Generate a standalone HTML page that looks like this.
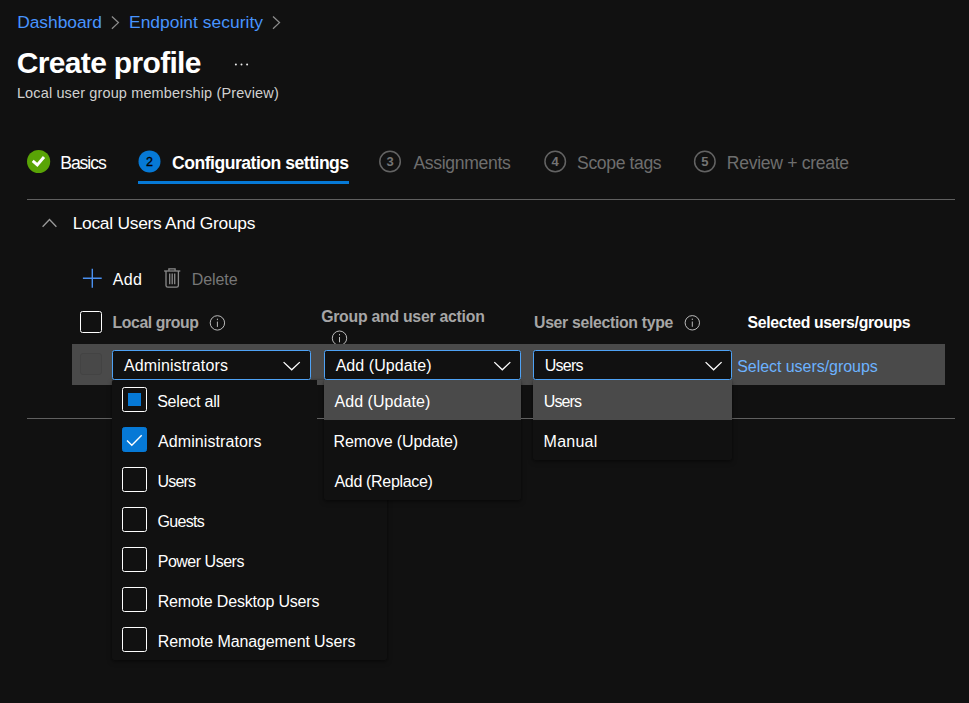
<!DOCTYPE html>
<html lang="en">
<head>
<meta charset="utf-8">
<title>Create profile - Local user group membership (Preview)</title>
<style>
html,body{margin:0;padding:0;}
body{width:969px;height:703px;overflow:hidden;background:#111111;position:relative;
 font-family:"Liberation Sans",Arial,sans-serif;color:#fff;}
.t{position:absolute;white-space:nowrap;line-height:1;}
.a{position:absolute;box-sizing:border-box;}
svg{position:absolute;overflow:visible;}
.hr{position:absolute;height:1px;background:#606060;}
.row{left:72px;top:343.5px;width:873px;height:41.2px;background:#4a4a4a;}
.dd{top:350px;height:30px;background:#111111;border:1.3px solid #4ea2f5;border-radius:2.5px;}
.list{background:#111111;border-radius:2px;box-shadow:0 2px 5px rgba(0,0,0,.38),0 0 2px rgba(0,0,0,.3);}
.hl{background:#4a4a4a;}
.cb{width:25px;height:25px;border:1.3px solid #ffffff;border-radius:2.5px;background:#111111;}
.num{position:absolute;width:22px;height:22px;line-height:22px;text-align:center;font-size:13px;font-weight:700;}
</style>
</head>
<body>
<!-- breadcrumb chevrons -->
<svg style="left:0;top:0" width="969" height="703" viewBox="0 0 969 703" fill="none">
 <path d="M111.9 16.5 L118.4 22.6 L111.9 28.7" stroke="#8c8c8c" stroke-width="1.3"/>
 <path d="M273 16.5 L279.5 22.6 L273 28.7" stroke="#8c8c8c" stroke-width="1.3"/>
 <!-- ellipsis -->
 <circle cx="235.9" cy="64.5" r="1" fill="#ececec"/><circle cx="241.5" cy="64.5" r="1" fill="#ececec"/><circle cx="247.1" cy="64.5" r="1" fill="#ececec"/>
 <!-- green check -->
 <circle cx="38.6" cy="161.5" r="11.6" fill="#59a406"/>
 <path d="M32.7 160.8 L37.3 164.9 L44.0 157.0" stroke="#ffffff" stroke-width="2.9"/>
 <!-- blue step -->
 <circle cx="149.5" cy="161.4" r="11" fill="#0679d6"/>
 <!-- pending step rings -->
 <g stroke="#636363" stroke-width="1.5">
  <circle cx="390.05" cy="161.45" r="10.25"/><circle cx="555.2" cy="161.45" r="10.25"/><circle cx="704.85" cy="161.45" r="10.25"/>
 </g>
 <!-- section chevron up -->
 <path d="M42.6 226.8 L49.5 219.5 L56.4 226.8" stroke="#9a9a9a" stroke-width="1.3"/>
 <!-- plus -->
 <path d="M92.3 268.8 V287.7 M82.9 278.25 H101.7" stroke="#4a90f0" stroke-width="1.4"/>
 <!-- trash -->
 <g stroke="#8a8a8a" stroke-width="1.3">
  <path d="M164.1 271 H180.3"/>
  <path d="M168.9 270.7 V268.9 H175.1 V270.7"/>
  <path d="M166 271 V285.4 Q166 287.2 167.8 287.2 H176.6 Q178.4 287.2 178.4 285.4 V271"/>
  <path d="M169.7 273.6 V284.3 M172.2 273.6 V284.3 M174.7 273.6 V284.3"/>
 </g>
 <!-- info icons -->
 <g stroke="#c4c4c4" stroke-width="0.95">
  <circle cx="217.4" cy="322.9" r="7.2"/><path d="M217.4 321.6 V326.9"/><path d="M217.4 318.7 V320.1"/>
  <circle cx="692.3" cy="322.8" r="7.2"/><path d="M692.3 321.5 V326.8"/><path d="M692.3 318.6 V320"/>
  <circle cx="339.5" cy="338.2" r="7.2"/><path d="M339.5 337 V342.3"/><path d="M339.5 334 V335.4"/>
 </g>
</svg>

<!-- tab step rings -->
<div class="num" style="left:138.5px;top:151.2px;color:#000;font-weight:400;font-size:12.5px;-webkit-text-stroke:0.35px #000">2</div>
<div class="num" style="left:379.05px;top:151px;color:#747474">3</div>
<div class="num" style="left:544.2px;top:151px;color:#747474">4</div>
<div class="num" style="left:693.85px;top:151px;color:#747474">5</div>
<div class="a" style="left:138px;top:181px;width:211px;height:3px;background:#0679d6"></div>
<div class="hr" style="left:27px;top:199px;width:928px"></div>
<div class="hr" style="left:27px;top:418px;width:928px"></div>

<!-- header checkbox -->
<div class="a cb" style="left:80px;top:311px;width:22px;height:22px"></div>

<!-- selected row -->
<div class="a row"></div>
<div class="a" style="left:80px;top:353.3px;width:22px;height:22px;background:#484848;border:1.3px solid #434343;border-radius:3px"></div>

<!-- list 1 -->
<div class="a list" style="left:112px;top:380px;width:275px;height:280px"></div>
<div class="a cb" style="left:122px;top:387px"></div>
<div class="a" style="left:128.3px;top:393.3px;width:13px;height:13px;background:#0679d6"></div>
<div class="a cb" style="left:122px;top:427px;background:#0679d6;border-color:#0679d6"></div>
<svg style="left:0;top:0" width="969" height="703" viewBox="0 0 969 703" fill="none">
 <path d="M127 440.5 L131.8 445.3 L141.7 435.3" stroke="#ffffff" stroke-width="1.4"/>
</svg>
<div class="a cb" style="left:122px;top:467px"></div>
<div class="a cb" style="left:122px;top:507px"></div>
<div class="a cb" style="left:122px;top:547px"></div>
<div class="a cb" style="left:122px;top:587px"></div>
<div class="a cb" style="left:122px;top:627px"></div>

<!-- patch between list1 and list2 (composited screenshot) -->
<div class="a" style="left:317px;top:380px;width:7px;height:120px;background:#111111"></div>
<div class="a" style="left:317px;top:380px;width:7px;height:4.7px;background:#4a4a4a"></div>
<div class="hr" style="left:317px;top:418px;width:7px"></div>

<!-- list 2 -->
<div class="a list" style="left:324px;top:380px;width:197px;height:120px"></div>
<div class="a hl" style="left:324px;top:380px;width:197px;height:40px"></div>
<!-- list 3 -->
<div class="a list" style="left:533px;top:380px;width:199px;height:80px"></div>
<div class="a hl" style="left:533px;top:380px;width:199px;height:40px"></div>

<div class="hr" style="left:521px;top:418px;width:12px"></div>
<div class="hr" style="left:317px;top:418px;width:7px"></div>
<!-- dropdown boxes -->
<div class="a dd" style="left:112px;width:199px"></div>
<div class="a dd" style="left:324px;width:197px"></div>
<div class="a dd" style="left:533px;width:199px"></div>
<svg style="left:0;top:0" width="969" height="703" viewBox="0 0 969 703" fill="none">
 <path d="M283.6 362.1 L291.7 369.8 L299.8 362.1" stroke="#ffffff" stroke-width="1.3"/>
 <path d="M494.3 362.1 L502.3 369.8 L510.3 362.1" stroke="#ffffff" stroke-width="1.3"/>
 <path d="M705.6 362.1 L713.6 369.8 L721.6 362.1" stroke="#ffffff" stroke-width="1.3"/>
</svg>

<div class="t" id="bc1" style="left:17.17px;top:14.00px;font-size:17.4px;font-weight:400;color:#4894fe;letter-spacing:-0.024px">Dashboard</div>
<div class="t" id="bc2" style="left:129.00px;top:14.00px;font-size:17.4px;font-weight:400;color:#4894fe;letter-spacing:0.036px">Endpoint security</div>
<div class="t" id="h1" style="left:16.85px;top:48.01px;font-size:30px;font-weight:700;color:#ffffff;letter-spacing:-0.675px">Create profile</div>
<div class="t" id="sub" style="left:16.92px;top:86.01px;font-size:14.5px;font-weight:400;color:#d0d0d0;letter-spacing:0.132px">Local user group membership (Preview)</div>
<div class="t" id="tab1" style="left:60.23px;top:155.01px;font-size:17.6px;font-weight:400;color:#ffffff;letter-spacing:-1.067px">Basics</div>
<div class="t" id="tab2" style="left:172.00px;top:155.01px;font-size:17.6px;font-weight:700;color:#ffffff;letter-spacing:-0.500px">Configuration settings</div>
<div class="t" id="tab3" style="left:413.46px;top:155.01px;font-size:17.6px;font-weight:400;color:#6e6e6e;letter-spacing:-0.345px">Assignments</div>
<div class="t" id="tab4" style="left:577.08px;top:155.01px;font-size:17.6px;font-weight:400;color:#6e6e6e;letter-spacing:-0.384px">Scope tags</div>
<div class="t" id="tab5" style="left:726.75px;top:155.01px;font-size:17.6px;font-weight:400;color:#6e6e6e;letter-spacing:-0.302px">Review + create</div>
<div class="t" id="sec" style="left:72.63px;top:215.01px;font-size:17.4px;font-weight:400;color:#ffffff;letter-spacing:-0.270px">Local Users And Groups</div>
<div class="t" id="add" style="left:112.63px;top:272.00px;font-size:16px;font-weight:400;color:#ffffff;letter-spacing:0.418px">Add</div>
<div class="t" id="del" style="left:191.78px;top:272.00px;font-size:16px;font-weight:400;color:#777777;letter-spacing:-0.097px">Delete</div>
<div class="t" id="c1" style="left:112.61px;top:315.00px;font-size:15.8px;font-weight:700;color:#a6a6a6;letter-spacing:-0.415px">Local group</div>
<div class="t" id="c2" style="left:321.13px;top:309.00px;font-size:15.8px;font-weight:700;color:#a6a6a6;letter-spacing:-0.243px">Group and user action</div>
<div class="t" id="c3" style="left:534.04px;top:315.00px;font-size:15.8px;font-weight:700;color:#a6a6a6;letter-spacing:-0.311px">User selection type</div>
<div class="t" id="c4" style="left:747.56px;top:315.00px;font-size:15.8px;font-weight:700;color:#ffffff;letter-spacing:-0.320px">Selected users/groups</div>
<div class="t" id="d1" style="left:123.92px;top:358.00px;font-size:16px;font-weight:400;color:#ffffff;letter-spacing:0.134px">Administrators</div>
<div class="t" id="d2" style="left:335.63px;top:358.00px;font-size:16px;font-weight:400;color:#ffffff;letter-spacing:0.062px">Add (Update)</div>
<div class="t" id="d3" style="left:544.84px;top:358.00px;font-size:16px;font-weight:400;color:#ffffff;letter-spacing:-0.761px">Users</div>
<div class="t" id="lnk" style="left:737.17px;top:359.00px;font-size:16px;font-weight:400;color:#6cb2ff;letter-spacing:-0.043px">Select users/groups</div>
<div class="t" id="l1a" style="left:157.17px;top:394.00px;font-size:16px;font-weight:400;color:#ffffff;letter-spacing:-0.211px">Select all</div>
<div class="t" id="l1b" style="left:157.97px;top:434.00px;font-size:16px;font-weight:400;color:#ffffff;letter-spacing:0.094px">Administrators</div>
<div class="t" id="l1c" style="left:157.58px;top:474.00px;font-size:16px;font-weight:400;color:#ffffff;letter-spacing:-0.857px">Users</div>
<div class="t" id="l1d" style="left:157.39px;top:514.00px;font-size:16px;font-weight:400;color:#ffffff;letter-spacing:-0.640px">Guests</div>
<div class="t" id="l1e" style="left:157.71px;top:554.00px;font-size:16px;font-weight:400;color:#ffffff;letter-spacing:-0.485px">Power Users</div>
<div class="t" id="l1f" style="left:157.71px;top:594.00px;font-size:16px;font-weight:400;color:#ffffff;letter-spacing:-0.193px">Remote Desktop Users</div>
<div class="t" id="l1g" style="left:157.71px;top:634.00px;font-size:16px;font-weight:400;color:#ffffff;letter-spacing:-0.106px">Remote Management Users</div>
<div class="t" id="l2a" style="left:334.46px;top:394.00px;font-size:16px;font-weight:400;color:#ffffff;letter-spacing:0.059px">Add (Update)</div>
<div class="t" id="l2b" style="left:333.62px;top:434.00px;font-size:16px;font-weight:400;color:#ffffff;letter-spacing:-0.120px">Remove (Update)</div>
<div class="t" id="l2c" style="left:334.46px;top:474.00px;font-size:16px;font-weight:400;color:#ffffff;letter-spacing:-0.321px">Add (Replace)</div>
<div class="t" id="l3a" style="left:543.84px;top:394.00px;font-size:16px;font-weight:400;color:#ffffff;letter-spacing:-0.928px">Users</div>
<div class="t" id="l3b" style="left:543.62px;top:434.00px;font-size:16px;font-weight:400;color:#ffffff;letter-spacing:0.220px">Manual</div>
</body>
</html>
